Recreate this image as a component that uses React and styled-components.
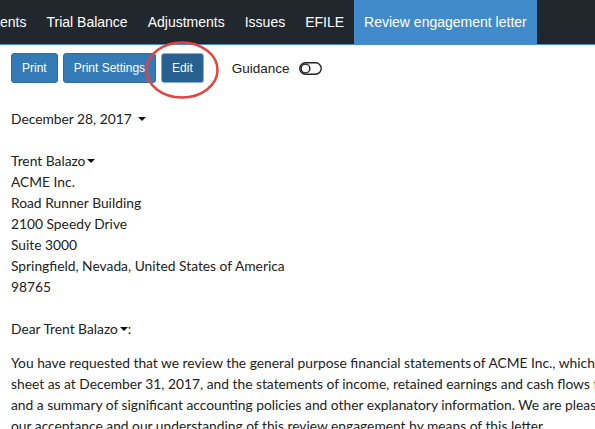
import React from "react";
import styled, { createGlobalStyle } from "styled-components";

const Global = createGlobalStyle`
  html, body { margin: 0; padding: 0; background: #fff; overflow: hidden; }
  body { width: 595px; height: 429px; }
`;

const Page = styled.div`
  width: 595px;
  height: 429px;
  overflow: hidden;
  position: relative;
`;

const Nav = styled.nav`
  display: flex;
  height: 44px;
  background: #22272e;
  border-bottom: 1px solid #4a8fd0;
  font-family: "Liberation Sans", Arial, sans-serif;
  font-size: 14px;
  white-space: nowrap;
`;

const Tab = styled.div`
  display: flex;
  align-items: center;
  padding: 0 10px;
  padding-left: ${(p) => (p.$cut ? "0" : "10px")};
  color: #fff;
  background: ${(p) => (p.$active ? "#428bca" : "transparent")};
`;

const Toolbar = styled.div`
  display: flex;
  align-items: center;
  gap: 5px;
  padding: 8px 11px 0;
  position: relative;
`;

const Button = styled.button`
  height: 30px;
  padding: 0 10px;
  border-radius: 3px;
  font-family: "Liberation Sans", Arial, sans-serif;
  font-size: 12px;
  color: #fff;
  background: ${(p) => (p.$active ? "#28608f" : "#337ab7")};
  border: 1px solid ${(p) => (p.$active ? "#7fb0e0" : "#2e6da4")};
  cursor: pointer;
`;

const Guidance = styled.div`
  display: flex;
  align-items: center;
  gap: 9px;
  margin-left: 23px;
  font-family: "Liberation Sans", Arial, sans-serif;
  font-size: 13.5px;
  color: #222;
`;

const Circle = styled.svg`
  position: absolute;
  left: 144px;
  top: -5px;
  overflow: visible;
`;

const Letter = styled.div`
  padding: 25px 11px 0;
  font-family: Lato, "Noto Sans", sans-serif;
  font-size: 13.8px;
  line-height: 21px;
  color: #222;
  white-space: nowrap;
`;

const Line = styled.div`
  display: flex;
  align-items: center;
  height: 21px;
`;

const Blank = styled.div`
  height: ${(p) => p.$h || 21}px;
`;

const Caret = styled.span`
  display: inline-block;
  width: 0;
  height: 0;
  margin-left: ${(p) => p.$gap || 2}px;
  border-top: 4.5px solid #111;
  border-left: 4px solid transparent;
  border-right: 4px solid transparent;
`;

const Tight = styled.span`
  margin-left: 2px;
`;

const Para = styled.p`
  margin: 13px 0 0;
  line-height: 21px;
`;

function Toggle() {
  return (
    <svg width="23" height="13" viewBox="0 0 23 13">
      <rect x="0.75" y="0.75" width="21.5" height="11.5" rx="5.75" fill="none" stroke="#222" strokeWidth="1.4" />
      <circle cx="6.5" cy="6.5" r="4.4" fill="none" stroke="#222" strokeWidth="1.4" />
    </svg>
  );
}

export default function App() {
  return (
    <Page>
      <Global />
      <Nav>
        <Tab $cut>ents</Tab>
        <Tab>Trial Balance</Tab>
        <Tab>Adjustments</Tab>
        <Tab>Issues</Tab>
        <Tab>EFILE</Tab>
        <Tab $active>Review engagement letter</Tab>
      </Nav>
      <Toolbar>
        <Button>Print</Button>
        <Button>Print Settings</Button>
        <Button $active>Edit</Button>
        <Guidance>
          Guidance
          <Toggle />
        </Guidance>
        <Circle width="74" height="58" viewBox="0 0 74 58">
          <ellipse cx="38" cy="30" rx="35.5" ry="27.5" fill="none" stroke="#e2443d" strokeWidth="2.5" />
        </Circle>
      </Toolbar>
      <Letter>
        <Line>
          December 28, 2017
          <Caret $gap={6} />
        </Line>
        <Blank />
        <Line>
          Trent Balazo
          <Caret />
        </Line>
        <Line>ACME Inc.</Line>
        <Line>Road Runner Building</Line>
        <Line>2100 Speedy Drive</Line>
        <Line>Suite 3000</Line>
        <Line>Springfield, Nevada, United States of America</Line>
        <Line>98765</Line>
        <Blank />
        <Line>
          Dear Trent Balazo
          <Caret />:
        </Line>
        <Para>
          You have requested that we review the general purpose financial statements<Tight>of</Tight> ACME Inc., which comprise the balance
          <br />
          sheet as at December 31, 2017, and the statements of income, retained earnings and cash flows for the year then ended,
          <br />
          and a summary of significant accounting policies and other explanatory information. We are pleased to confirm
          <br />
          our acceptance and our understanding of this review engagement by means of this letter.
        </Para>
      </Letter>
    </Page>
  );
}
